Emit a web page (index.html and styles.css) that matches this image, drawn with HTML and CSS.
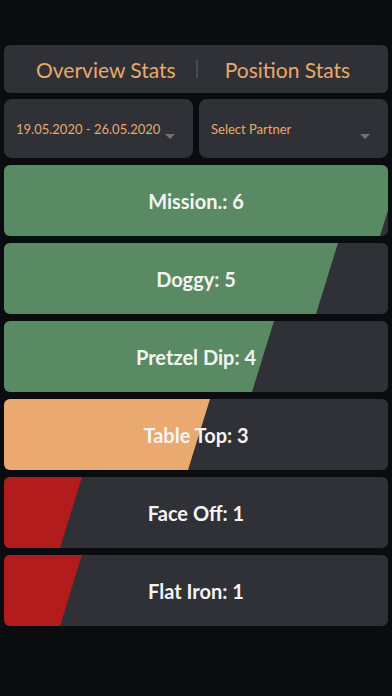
FILE: index.html
```html
<!DOCTYPE html>
<html>
<head>
<meta charset="utf-8">
<link rel="stylesheet" href="styles.css">
</head>
<body>
<div class="page">
  <div class="tabs">
    <span class="tab tab-left">Overview Stats</span>
    <span class="divider"></span>
    <span class="tab tab-right">Position Stats</span>
  </div>
  <div class="filters">
    <div class="select">
      <span class="select-text">19.05.2020 - 26.05.2020</span>
      <span class="caret"></span>
    </div>
    <div class="select">
      <span class="select-text">Select Partner</span>
      <span class="caret"></span>
    </div>
  </div>
  <div class="rows">
    <div class="row"><div class="fill green" style="--w:384px"></div><div class="label">Mission.: 6</div></div>
    <div class="row"><div class="fill green" style="--w:320px"></div><div class="label">Doggy: 5</div></div>
    <div class="row"><div class="fill green" style="--w:256px"></div><div class="label">Pretzel Dip: 4</div></div>
    <div class="row"><div class="fill orange" style="--w:192px"></div><div class="label">Table Top: 3</div></div>
    <div class="row"><div class="fill red" style="--w:64px"></div><div class="label">Face Off: 1</div></div>
    <div class="row"><div class="fill red" style="--w:64px"></div><div class="label">Flat Iron: 1</div></div>
  </div>
</div>
</body>
</html>
```

FILE: styles.css
```css
html, body {
  margin: 0;
  padding: 0;
  background: #0b0c0f;
  font-family: Lato, "Noto Sans", sans-serif;
}
.page {
  width: 392px;
  height: 696px;
  box-sizing: border-box;
  padding: 45px 4px 0;
  display: flex;
  flex-direction: column;
  gap: 6px;
}
.tabs {
  height: 48px;
  background: #303136;
  border-radius: 6px;
  display: flex;
  align-items: center;
  color: #e8a86c;
  font-size: 21px;
}
.tab-left {
  margin-left: 32px;
}
.divider {
  width: 2px;
  height: 18px;
  background: #4a4b52;
  margin: 0 27px 0 20px;
}
.filters {
  display: flex;
  gap: 6px;
  height: 59px;
}
.select {
  flex: 1;
  background: #303136;
  border-radius: 8px;
  display: flex;
  align-items: center;
  justify-content: space-between;
  padding: 0 18px 0 12px;
  color: #e8a86c;
  font-size: 13px;
}
.caret {
  width: 0;
  height: 0;
  border-left: 5px solid transparent;
  border-right: 5px solid transparent;
  border-top: 5px solid #707176;
  margin-top: 16px;
}
.rows {
  display: flex;
  flex-direction: column;
  gap: 7px;
  margin-top: 1px;
}
.row {
  height: 71px;
  background: #303136;
  border-radius: 6px;
  overflow: hidden;
  display: grid;
}
.fill, .label {
  grid-area: 1 / 1;
}
.fill {
  clip-path: polygon(0 0, calc(var(--w) + 14px) 0, calc(var(--w) - 8px) 100%, 0 100%);
}
.green { background: #5a8a63; }
.orange { background: #eaa96f; }
.red { background: #b31c1d; }
.label {
  display: flex;
  align-items: center;
  justify-content: center;
  color: #f4f4f4;
  font-size: 20px;
  font-weight: 700;
  position: relative;
}
```
